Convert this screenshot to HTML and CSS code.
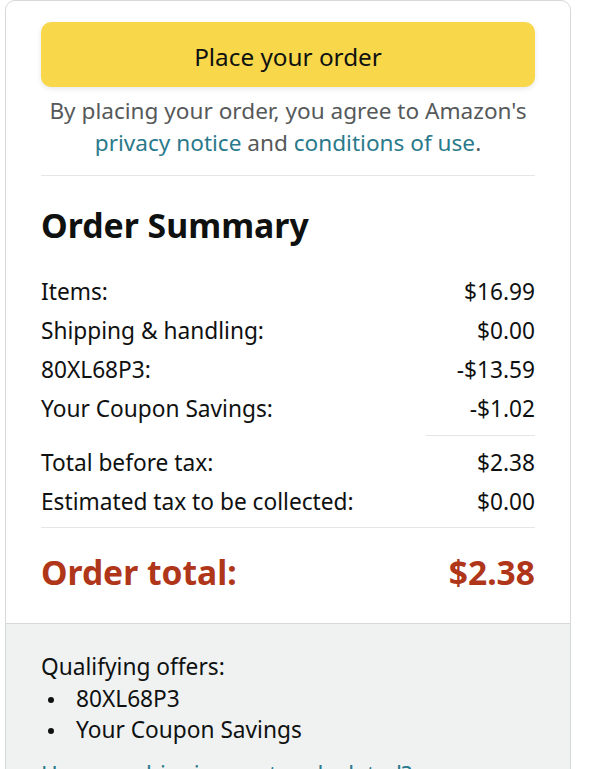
FILE: index.html
```html
<!DOCTYPE html>
<html>
<head>
<meta charset="utf-8">
<link rel="stylesheet" href="styles.css">
</head>
<body>
<div class="card">
  <div class="main">
    <button class="place-btn">Place your order</button>
    <p class="agree">By placing your order, you agree to Amazon's <a href="#">privacy notice</a> and <a href="#">conditions of use</a>.</p>
    <hr class="divider">
    <h2 class="title">Order Summary</h2>
    <div class="rows">
      <div class="row"><span>Items:</span><span>$16.99</span></div>
      <div class="row"><span>Shipping &amp; handling:</span><span>$0.00</span></div>
      <div class="row"><span>80XL68P3:</span><span>-$13.59</span></div>
      <div class="row"><span>Your Coupon Savings:</span><span>-$1.02</span></div>
    </div>
    <hr class="divider short">
    <div class="rows">
      <div class="row"><span>Total before tax:</span><span>$2.38</span></div>
      <div class="row"><span>Estimated tax to be collected:</span><span>$0.00</span></div>
    </div>
    <hr class="divider tight">
    <div class="total"><span>Order total:</span><span>$2.38</span></div>
  </div>
  <div class="offers">
    <p class="offers-title">Qualifying offers:</p>
    <ul class="offer-list">
      <li>80XL68P3</li>
      <li>Your Coupon Savings</li>
    </ul>
    <a class="ship-link" href="#">How are shipping costs calculated?</a>
  </div>
</div>
</body>
</html>
```

FILE: styles.css
```css
html, body {
  margin: 0;
  padding: 0;
  background: #ffffff;
}
body {
  font-family: "Noto Sans", "Open Sans", sans-serif;
  color: #0f1111;
  height: 769px;
  overflow: hidden;
}
.card {
  margin-left: 5px;
  margin-top: 0;
  width: 566px;
  box-sizing: border-box;
  border: 1px solid #d5d9d9;
  border-radius: 10px;
  overflow: hidden;
}
.main {
  padding: 21px 35px 31px;
}
.place-btn {
  display: block;
  width: 100%;
  height: 65px;
  border: none;
  border-radius: 10px;
  background: #f8d84a;
  box-shadow: 0 2px 5px rgba(213, 217, 217, 0.6);
  font-family: inherit;
  font-size: 24.3px;
  color: #0f1111;
  padding: 3px 0 0;
}
.agree {
  margin: 8px 0 0;
  text-align: center;
  font-size: 22.6px;
  line-height: 32px;
  color: #565959;
}
.agree a {
  color: #2a7a8b;
  text-decoration: none;
}
.divider {
  border: none;
  border-top: 1px solid #e3e6e6;
  margin: 16px 0 0;
  height: 0;
}
.divider.short {
  margin: 7px 0 7px auto;
  width: 109px;
}
.divider.tight {
  margin: 6px 0 0;
}
.title {
  margin: 29px 0 0;
  font-size: 33.8px;
  line-height: 40px;
  font-weight: 700;
}
.rows {
  display: flex;
  flex-direction: column;
}
.title + .rows {
  margin-top: 27px;
}
.row {
  display: flex;
  justify-content: space-between;
  font-size: 22.7px;
  line-height: 39px;
}
.total {
  margin-top: 24px;
  display: flex;
  justify-content: space-between;
  font-size: 33.6px;
  line-height: 40px;
  font-weight: 700;
  color: #b0361a;
}
.offers {
  background: #f0f2f2;
  border-top: 1px solid #d5d9d9;
  padding: 27px 35px 20px;
}
.offers-title {
  margin: 0;
  font-size: 22.7px;
  line-height: 32px;
}
.offer-list {
  margin: 0;
  padding: 0;
  list-style: none;
  font-size: 22.7px;
  line-height: 31px;
}
.offer-list li {
  display: flex;
  align-items: center;
}
.offer-list li::before {
  content: "";
  flex: none;
  width: 6px;
  height: 6px;
  border-radius: 50%;
  background: #0f1111;
  margin: 2px 22px 0 7px;
}
.ship-link {
  display: block;
  margin-top: 14px;
  font-size: 22.7px;
  line-height: 32px;
  color: #2a7a8b;
  text-decoration: none;
}
```
